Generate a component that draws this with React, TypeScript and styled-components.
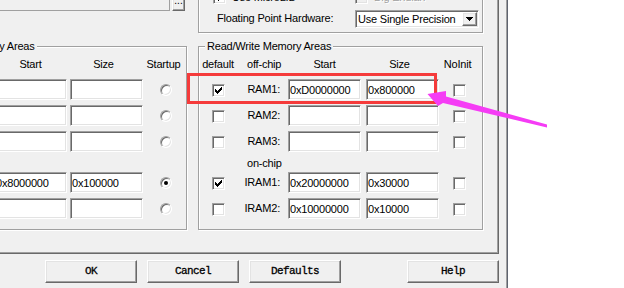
import React from "react";
import styled, { createGlobalStyle, css } from "styled-components";

const GlobalStyle = createGlobalStyle`
  html, body { margin: 0; padding: 0; background: #ffffff; }
  *, *::before, *::after { box-sizing: border-box; }
`;

const sunken = css`
  border: 1px solid;
  border-color: #a0a0a0 #ffffff #ffffff #a0a0a0;
  box-shadow: inset 1px 1px 0 #696969, inset -1px -1px 0 #e3e3e3;
`;

const raised = css`
  background: #f0f0f0;
  border: 1px solid;
  border-color: #ffffff #696969 #696969 #ffffff;
  box-shadow: inset -1px -1px 0 #a0a0a0, inset 1px 1px 0 #e3e3e3;
`;

const Viewport = styled.div`
  position: relative;
  width: 624px;
  height: 288px;
  overflow: hidden;
  background: #ffffff;
`;

const Dialog = styled.div`
  width: 624px;
  height: 340px;
  margin: -36px 0 0 -116px;
  padding: 0 8px;
  display: flex;
  flex-direction: column;
  background: #f0f0f0;
  border-right: 1px solid #5f6470;
  box-shadow: inset -1px 0 0 #a0a0a0;
  font-family: "Liberation Sans", Arial, sans-serif;
  font-size: 11px;
  letter-spacing: -0.2px;
  line-height: 13px;
  color: #000000;
`;

const TabPanel = styled.div`
  display: grid;
  grid-template-columns: 283px 285px;
  column-gap: 11px;
  row-gap: 7px;
  padding: 8px 15px 23px 11px;
  border: 1px solid;
  border-color: #ffffff #696969 #696969 #ffffff;
  box-shadow: inset -1px -1px 0 #a0a0a0;
`;

const PathRow = styled.div`
  display: flex;
  gap: 2px;
  height: 21px;
  margin: 17px 2px 0 0;
  align-self: start;
`;

const PathEdit = styled.div`
  flex: 1;
  background: #f0f0f0;
  border: 1px solid #a0a0a0;
`;

const BrowseButton = styled.div`
  ${raised};
  width: 13px;
  display: flex;
  align-items: center;
  justify-content: center;
  font-size: 10px;
  letter-spacing: 0;
  color: #000;
`;

const Group = styled.fieldset<{ $pad: string }>`
  margin: 0;
  min-width: 0;
  padding: ${(p) => p.$pad};
  border: 1px solid #a0a0a0;
  box-shadow: inset 1px 1px 0 #ffffff, 1px 1px 0 #ffffff;
`;

const GroupTitle = styled.legend`
  margin-left: 6px;
  padding: 0 2px;
  background: #f0f0f0;
  line-height: 13px;
  white-space: nowrap;
`;

const CodeRow = styled.div<{ $h: number; $top?: number }>`
  display: grid;
  grid-template-columns: 142px 124px;
  align-items: center;
  height: ${(p) => p.$h}px;
  margin-top: ${(p) => p.$top ?? 0}px;
`;

const CheckLabel = styled.label<{ $disabled?: boolean }>`
  display: flex;
  align-items: center;
  gap: 6px;
  white-space: nowrap;
  color: ${(p) => (p.$disabled ? "#a0a0a0" : "#000000")};
  text-shadow: ${(p) => (p.$disabled ? "1px 1px 0 #ffffff" : "none")};
`;

const FieldLabel = styled.span`
  padding-left: 4px;
  margin-top: -2px;
  white-space: nowrap;
`;

const Combo = styled.div`
  ${sunken};
  display: flex;
  align-items: stretch;
  width: 124px;
  height: 18px;
  padding: 1px;
  background: #ffffff;
`;

const ComboText = styled.span`
  flex: 1;
  padding-left: 1px;
  line-height: 14px;
  white-space: nowrap;
`;

const DropButton = styled.span`
  ${raised};
  width: 15px;
  display: flex;
  align-items: center;
  justify-content: center;
`;

const Check = styled.span<{ $disabled?: boolean }>`
  ${sunken};
  display: inline-flex;
  align-items: center;
  justify-content: center;
  flex: none;
  width: 13px;
  height: 13px;
  background: ${(p) => (p.$disabled ? "#f0f0f0" : "#ffffff")};
`;

const RadioDot = styled.span<{ $on?: boolean }>`
  ${sunken};
  display: inline-flex;
  align-items: center;
  justify-content: center;
  flex: none;
  width: 12px;
  height: 12px;
  border-radius: 50%;
  background: #ffffff;
  &::after {
    content: "";
    width: 4px;
    height: 4px;
    border-radius: 50%;
    background: ${(p) => (p.$on ? "#000000" : "transparent")};
  }
`;

const MemGrid = styled.div<{ $startCol: number }>`
  display: grid;
  grid-template-columns: 38px 51px ${(p) => p.$startCol}px 73px 43px;
  grid-template-rows: 16px 21px 21px 21px 10px 21px 21px;
  row-gap: 5px;
  align-items: center;
`;

const HeadCell = styled.span<{ $l?: number; $r?: number; $align?: string; $w?: number }>`
  align-self: start;
  text-align: ${(p) => p.$align ?? "center"};
  padding-left: ${(p) => p.$l ?? 0}px;
  padding-right: ${(p) => p.$r ?? 0}px;
  width: ${(p) => (p.$w ? `${p.$w}px` : "auto")};
  white-space: nowrap;
`;

const SectionLabel = styled.span`
  grid-column: 1 / -1;
  align-self: start;
  padding-left: 48px;
`;

const CenterCell = styled.span<{ $l?: number; $r?: number; $t?: number }>`
  display: flex;
  justify-content: center;
  padding: ${(p) => p.$t ?? 0}px ${(p) => p.$r ?? 0}px 0 ${(p) => p.$l ?? 0}px;
`;

const RowLabel = styled.span`
  text-align: right;
  padding-right: 8px;
  white-space: nowrap;
`;

const Field = styled.input`
  ${sunken};
  width: 73px;
  height: 21px;
  margin: 0;
  padding: 0 0 0 1px;
  background: #ffffff;
  font: inherit;
  letter-spacing: inherit;
  color: #000000;
  outline: none;
`;

const ButtonRow = styled.div`
  display: flex;
  justify-content: flex-end;
  gap: 10px;
  margin-top: 6px;
`;

const PushButton = styled.div<{ $lead?: number }>`
  ${raised};
  width: 92px;
  height: 23px;
  margin-left: ${(p) => p.$lead ?? 0}px;
  display: flex;
  align-items: center;
  justify-content: center;
  font-family: "Liberation Mono", "Courier New", monospace;
  font-size: 11px;
  letter-spacing: -0.6px;
  color: #000000;
  -webkit-text-stroke: 0.3px #000000;
`;

const Overlay = styled.svg`
  position: absolute;
  left: 0;
  top: 0;
  pointer-events: none;
`;

const CheckMark = () => (
  <svg width="9" height="9" viewBox="0 0 9 9" shapeRendering="crispEdges">
    <polygon
      fill="#000"
      points="1,3 2,3 2,4 3,4 3,5 4,5 4,4 5,4 5,3 6,3 6,2 7,2 7,1 8,1 8,4 7,4 7,5 6,5 6,6 5,6 5,7 4,7 4,8 3,8 3,7 2,7 2,6 1,6"
    />
  </svg>
);

const CheckBox = ({ checked, disabled }: { checked?: boolean; disabled?: boolean }) => (
  <Check $disabled={disabled}>{checked ? <CheckMark /> : null}</Check>
);

type MemRow = { def: boolean; name: string; start: string; size: string; last: boolean };

const roRows: MemRow[] = [
  { def: false, name: "ROM1:", start: "", size: "", last: false },
  { def: false, name: "ROM2:", start: "", size: "", last: false },
  { def: false, name: "ROM3:", start: "", size: "", last: false },
  { def: true, name: "IROM1:", start: "0x8000000", size: "0x100000", last: true },
  { def: false, name: "IROM2:", start: "", size: "", last: false },
];

const rwRows: MemRow[] = [
  { def: true, name: "RAM1:", start: "0xD0000000", size: "0x800000", last: false },
  { def: false, name: "RAM2:", start: "", size: "", last: false },
  { def: false, name: "RAM3:", start: "", size: "", last: false },
  { def: true, name: "IRAM1:", start: "0x20000000", size: "0x30000", last: false },
  { def: false, name: "IRAM2:", start: "0x10000000", size: "0x10000", last: false },
];

const MemoryGroup = ({
  title,
  rows,
  lastHead,
  radio,
  startCol,
}: {
  title: string;
  rows: MemRow[];
  lastHead: string;
  radio: boolean;
  startCol: number;
}) => {
  const renderRow = (r: MemRow) => (
    <React.Fragment key={r.name}>
      <CenterCell $t={2}>
        <CheckBox checked={r.def} />
      </CenterCell>
      <RowLabel>{r.name}</RowLabel>
      <Field readOnly value={r.start} />
      <Field readOnly value={r.size} />
      {radio ? (
        <CenterCell $l={2}>
          <RadioDot $on={r.last} />
        </CenterCell>
      ) : (
        <CenterCell $r={2} $t={2}>
          <CheckBox checked={r.last} />
        </CenterCell>
      )}
    </React.Fragment>
  );
  return (
    <Group $pad="5px 0 10px 0">
      <GroupTitle>{title}</GroupTitle>
      <MemGrid $startCol={startCol}>
        <HeadCell>default</HeadCell>
        <HeadCell $align="left" $l={10}>
          off-chip
        </HeadCell>
        <HeadCell $w={73}>Start</HeadCell>
        <HeadCell $r={6}>Size</HeadCell>
        <HeadCell $r={radio ? 2 : 6}>{lastHead}</HeadCell>
        {rows.slice(0, 3).map(renderRow)}
        <SectionLabel>on-chip</SectionLabel>
        {rows.slice(3).map(renderRow)}
      </MemGrid>
    </Group>
  );
};

export default function App() {
  return (
    <>
      <GlobalStyle />
      <Viewport>
        <Dialog>
          <TabPanel>
            <PathRow>
              <PathEdit />
              <BrowseButton>...</BrowseButton>
            </PathRow>
            <Group $pad="5px 0 4px 14px">
              <GroupTitle>Code Generation</GroupTitle>
              <CodeRow $h={13}>
                <CheckLabel>
                  <CheckBox checked />
                  <span>Use MicroLIB</span>
                </CheckLabel>
                <CheckLabel $disabled>
                  <CheckBox disabled />
                  <span>Big Endian</span>
                </CheckLabel>
              </CodeRow>
              <CodeRow $h={18} $top={6}>
                <FieldLabel>Floating Point Hardware:</FieldLabel>
                <Combo>
                  <ComboText>Use Single Precision</ComboText>
                  <DropButton>
                    <svg width="7" height="4" viewBox="0 0 7 4" shapeRendering="crispEdges">
                      <polygon points="0,0 7,0 3.5,4" fill="#000" />
                    </svg>
                  </DropButton>
                </Combo>
              </CodeRow>
            </Group>
            <MemoryGroup
              title="Read/Only Memory Areas"
              rows={roRows}
              lastHead="Startup"
              radio
              startCol={76}
            />
            <MemoryGroup
              title="Read/Write Memory Areas"
              rows={rwRows}
              lastHead="NoInit"
              radio={false}
              startCol={78}
            />
          </TabPanel>
          <ButtonRow>
            <PushButton>OK</PushButton>
            <PushButton>Cancel</PushButton>
            <PushButton>Defaults</PushButton>
            <PushButton $lead={56}>Help</PushButton>
          </ButtonRow>
        </Dialog>
        <Overlay width="624" height="288" viewBox="0 0 624 288">
          <rect x="188.5" y="74.5" width="247" height="28" fill="none" stroke="#f53b3b" strokeWidth="3" />
          <polygon
            points="427.5,94 446,91 446,96.5 547,124.5 547,127.5 443,103 438,106"
            fill="#f53cf5"
          />
        </Overlay>
      </Viewport>
    </>
  );
}
